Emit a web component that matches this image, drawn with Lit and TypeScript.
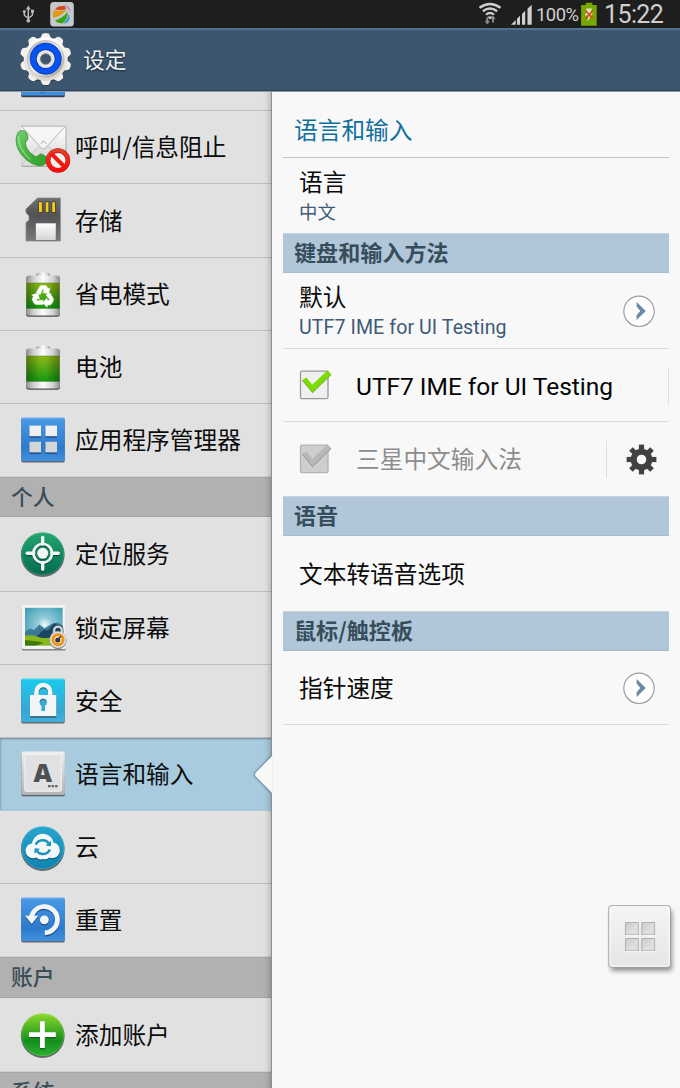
import { LitElement, html, svg, css, nothing } from "lit";
import { customElement, property } from "lit/decorators.js";
import { classMap } from "lit/directives/class-map.js";

const GEAR_ANGLES = [0, 36, 72, 108, 144, 180, 216, 252, 288, 324];
const COG_ANGLES = [0, 45, 90, 135, 180, 225, 270, 315];

const defs = svg`
  <defs>
    <linearGradient id="blue" x1="0" y1="0" x2="0" y2="1">
      <stop offset="0" stop-color="#4b9be9"/><stop offset=".7" stop-color="#2c7bcb"/><stop offset="1" stop-color="#4290e0"/>
    </linearGradient>
    <linearGradient id="cyan" x1="0" y1="0" x2="0" y2="1">
      <stop offset="0" stop-color="#1ccbee"/><stop offset=".75" stop-color="#37a6d2"/><stop offset="1" stop-color="#41b0dc"/>
    </linearGradient>
    <linearGradient id="teal" x1="0" y1="0" x2="0" y2="1">
      <stop offset="0" stop-color="#24a670"/><stop offset="1" stop-color="#026a50"/>
    </linearGradient>
    <linearGradient id="sea" x1="0" y1="0" x2="0" y2="1">
      <stop offset="0" stop-color="#27a5cd"/><stop offset="1" stop-color="#0f83b0"/>
    </linearGradient>
    <linearGradient id="lime" x1="0" y1="0" x2="0" y2="1">
      <stop offset="0" stop-color="#8fd92c"/><stop offset=".65" stop-color="#138f1d"/><stop offset="1" stop-color="#2fb02c"/>
    </linearGradient>
    <linearGradient id="cell" x1="0" y1="0" x2="0" y2="1">
      <stop offset="0" stop-color="#8fb814"/><stop offset="1" stop-color="#139a14"/>
    </linearGradient>
    <linearGradient id="side" x1="0" y1="0" x2="1" y2="0">
      <stop offset="0" stop-color="#000" stop-opacity=".33"/><stop offset=".4" stop-color="#000" stop-opacity="0"/>
      <stop offset=".6" stop-color="#000" stop-opacity="0"/><stop offset="1" stop-color="#000" stop-opacity=".33"/>
    </linearGradient>
    <linearGradient id="metal" x1="0" y1="0" x2="1" y2="0">
      <stop offset="0" stop-color="#8b8b8b"/><stop offset=".22" stop-color="#d0d0d0"/><stop offset=".5" stop-color="#fdfdfd"/>
      <stop offset=".8" stop-color="#d0d0d0"/><stop offset="1" stop-color="#8b8b8b"/>
    </linearGradient>
    <linearGradient id="paper" x1="0" y1="0" x2="0" y2="1">
      <stop offset="0" stop-color="#ffffff"/><stop offset="1" stop-color="#d4d4d4"/>
    </linearGradient>
    <linearGradient id="phone" x1="0" y1="0" x2="1" y2="1">
      <stop offset="0" stop-color="#78cf75"/><stop offset=".45" stop-color="#48b445"/><stop offset="1" stop-color="#2f9e2b"/>
    </linearGradient>
    <linearGradient id="red" x1="0" y1="0" x2="0" y2="1">
      <stop offset="0" stop-color="#e53c28"/><stop offset="1" stop-color="#ff0a08"/>
    </linearGradient>
    <linearGradient id="card" x1="0" y1="0" x2="0" y2="1">
      <stop offset="0" stop-color="#6b6e70"/><stop offset=".4" stop-color="#515355"/><stop offset="1" stop-color="#77797b"/>
    </linearGradient>
    <radialGradient id="sky" cx=".52" cy=".45" r=".65">
      <stop offset="0" stop-color="#f0fbfb"/><stop offset=".3" stop-color="#8fcbd9"/><stop offset="1" stop-color="#3f9cb4"/>
    </radialGradient>
    <linearGradient id="keycap" x1="0" y1="0" x2="0" y2="1">
      <stop offset="0" stop-color="#efefef"/><stop offset="1" stop-color="#b3b3b5"/>
    </linearGradient>
  </defs>`;

const tile = (fill: string) => svg`
  <rect x="21.2" y="14.6" width="43.6" height="43.8" rx="1.6" fill="#39424c" opacity=".75"/>
  <rect x="21.2" y="13.4" width="43.6" height="43.6" rx="1.6" fill=${fill}/>
  <path d="M22.5 14h41" stroke="#fff" stroke-opacity=".35" stroke-width=".9"/>`;

const disc = (fill: string) => svg`
  <circle cx="42.7" cy="38" r="21.9" fill="#36423e" opacity=".75"/>
  <circle cx="42.7" cy="36.7" r="21.5" fill=${fill}/>
  <circle cx="42.7" cy="36.7" r="21" fill="none" stroke="#fff" stroke-opacity=".2" stroke-width=".8"/>`;

const batteryBody = svg`
  <ellipse cx="43.2" cy="16.8" rx="7" ry="2.6" fill="url(#metal)"/>
  <rect x="26.2" y="20" width="33.6" height="38.8" rx="2.5" fill="#4e4e4e"/>
  <rect x="26" y="17.5" width="34" height="40" rx="3" fill="url(#metal)"/>
  <rect x="26.4" y="25" width="33.2" height="25.4" fill="url(#cell)"/>
  <rect x="26.4" y="25" width="33.2" height="25.4" fill="url(#side)"/>
  <path d="M26.4 50.4h33.2M26.4 25h33.2" stroke="#3a6a18" stroke-width=".7" opacity=".6"/>`;

const icons: Record<string, unknown> = {
  block: svg`
    <rect x="21.5" y="16" width="45" height="40" rx="1" fill="#8a8a8a" opacity=".6"/>
    <rect x="21.3" y="15" width="44.2" height="39.8" rx="1" fill="url(#paper)"/>
    <path d="M21.5 54 41 32.5a3.5 3.5 0 0 1 5 0L65.500 54" fill="#dedede" stroke="#c5c5c5" stroke-width="1"/>
    <path d="M21.3 15.200h44.200L45.500 37a3 3 0 0 1-4.200 0z" fill="#f5f5f5" stroke="#adadad" stroke-width=".9"/>
    <path d="M41 32.500l2.500-2.600 3 2.800" fill="none" stroke="#c8c8c8" stroke-width="1.200"/>
    <path d="M17.600 23.200c1.500-2.600 5.600-3.500 8.100-1.500 1.700 1.500 2.900 6.600 1.700 8.600-1.100 1.200-2.300 1.500-1.900 3.800 1 5.300 4.400 9.300 9.500 12.200 2.500 1.200 3.100-1.600 5.500-2.300 2.200-.4 6.500 3 7.400 5.200.9 2.500-3.900 6.100-7.400 6.500C30.500 55.800 15 43 16.200 28.500z" transform="translate(0 -1)" fill="url(#phone)" stroke="#2e8f2d" stroke-width=".8"/>
    <path d="M18.500 25c-.5 8.500 4.300 17.500 12 23.500" fill="none" stroke="#b5eeb0" stroke-width="1.500" opacity=".5"/>
    <circle cx="58" cy="49.500" r="9.900" fill="#f1efed" stroke="#a01e16" stroke-width="4.600"/>
    <circle cx="58" cy="49.300" r="9.900" fill="none" stroke="url(#red)" stroke-width="3.900"/>
    <path d="M51.300 42.600l13.400 13.400" stroke="#f0180f" stroke-width="4"/>`,
  storage: svg`
    <path d="M37.500 14H60.400V57H26V38.600l3-2.400V32l-3-3.500V25z" fill="url(#card)" stroke="#8a8c8e" stroke-width=".8"/>
    <g fill="#f4cc1c" stroke="#3c3a30" stroke-width=".8">
      <rect x="38.600" y="17.800" width="3.700" height="10.800"/><rect x="45.200" y="17.800" width="3.700" height="10.800"/><rect x="51.800" y="17.800" width="3.700" height="10.800"/>
    </g>
    <rect x="35.500" y="39" width="20.600" height="17.500" fill="url(#paper)" stroke="#55585a" stroke-width=".6"/>`,
  saver: svg`${batteryBody}
    <g transform="translate(43 38.600) scale(1.080) translate(-43 -38.300)">
    ${[0, 120, 240].map(
      (a) => svg`<g transform="rotate(${a} 43 38.300)">
        <path d="M36.800 34.400l3-5.100q.7-1.200 2-1.200h3.100q1.200 0 1.900 1.200l1 1.700 1.700-1-1.200 5.900-5.900-1.600 1.700-1-1.500-2.600-2.200 5.900z" fill="#fff" stroke="#fff" stroke-width=".4"/>
      </g>`
    )}</g>`,
  battery: batteryBody,
  apps: svg`${tile("url(#blue)")}
    ${[[29.4, 21.6], [45.4, 21.6], [29.4, 37.800], [45.4, 37.800]].map(
      ([x, y]) => svg`<rect x=${x} y=${y + 1.300} width="11.600" height="10.700" fill="#1d4b80"/>
        <rect x=${x} y=${y} width="11.600" height="10.600" fill=${y < 30 ? "#f0f0f0" : "#d3d5d7"}/>`
    )}`,
  location: svg`${disc("url(#teal)")}
    ${[["#06513c", 1.2], ["#f3f6f4", 0]].map(
      ([c, dy]) => svg`<g transform="translate(0 ${dy})" stroke=${c} fill="none">
        <circle cx="42.700" cy="36.300" r="9.300" stroke-width="2.700"/>
        <path d="M42.700 20.500v6.500M42.700 45.800v6.500M27.200 36.300h6.500M51.800 36.300h6.500" stroke-width="3.400" stroke-linecap="round"/>
        <circle cx="42.700" cy="36.300" r="5.500" fill=${c} stroke="none"/>
      </g>`
    )}`,
  lockscreen: svg`
    <rect x="21.800" y="14.500" width="44" height="44" rx="1.500" fill="#6d6d6d" opacity=".8"/>
    <rect x="21.800" y="13" width="44" height="44" rx="1.500" fill="#f3f3f3"/>
    <rect x="25" y="15.800" width="37.600" height="37.600" fill="url(#sky)"/>
    <path d="M25 40l5-3.500 4 1.500 5.500-5.500 5 4 7-4.500 6-1.500 5 3V48H25z" fill="#3b7895"/>
    <path d="M36 45l8-7.500 4 1 6-7.500 3.500 2 5.100 1V53H50z" fill="#1b4663"/>
    <path d="M25 43.500q7-1 12 1t10 1.500l8-1 7.600 1v7.400H25z" fill="#87b91c"/>
    <path d="M25 48q11 1 19 3l-8 2.400H25z" fill="#3f7804"/>
    <path d="M54 42v-3.500a4 4 0 0 1 8 0V42" fill="none" stroke="#d9dcdd" stroke-width="2.500"/>
    <path d="M52.700 41.500v-3a5.300 5.300 0 0 1 10.600 0v3" fill="none" stroke="#39434a" stroke-width=".6"/>
    <circle cx="58" cy="48.300" r="8.600" fill="#6f6f6f"/>
    <circle cx="58" cy="47.700" r="8.400" fill="#dbdbdb"/>
    <circle cx="58" cy="47.700" r="5" fill="#fff" stroke="#f29213" stroke-width="3"/>
    <circle cx="57.800" cy="48" r="2.600" fill="#30383e"/><path d="M57.800 48l3-3.800" stroke="#30383e" stroke-width="1.400"/>`,
  security: svg`${tile("url(#cyan)")}
    <path d="M36.400 32v-5a6.900 6.900 0 0 1 13.800 0v5" fill="none" stroke="#24617a" stroke-width="4.500" transform="translate(0 1.200)"/>
    <rect x="30" y="31" width="26.300" height="21.600" fill="#1f5067"/>
    <path d="M36.400 32v-5a6.900 6.900 0 0 1 13.800 0v5" fill="none" stroke="#f3f5f6" stroke-width="4.500"/>
    <rect x="30" y="30" width="26.300" height="21.200" fill="#f3f5f6"/>
    <circle cx="43.200" cy="37.500" r="3.600" fill="#3aa9d3"/><path d="M41.400 38h3.600v8h-3.600z" fill="#3aa9d3"/>
    <path d="M39.800 36.500a3.600 3.600 0 0 1 6.800 0" fill="none" stroke="#22607a" stroke-width=".9"/>`,
  language: svg`
    <rect x="21.500" y="15" width="43.400" height="43.300" rx="1.500" fill="#3e4a52" opacity=".8"/>
    <rect x="21.500" y="13.600" width="43.400" height="43.400" rx="1.500" fill="url(#keycap)"/>
    <rect x="24.800" y="16.500" width="36.600" height="36.800" rx="1" fill="#e0e1e3" stroke="#f1f1f1" stroke-width="1"/>
    <text x="42.700" y="43.600" text-anchor="middle" font-family="Open Sans, sans-serif" font-weight="800" font-size="25.500" fill="#4f5051">A</text>
    <path d="M48 48.200h2.600M51.500 48.200h2.600M55 48.200h2.600" stroke="#666" stroke-width="2.200"/>`,
  cloud: svg`${disc("url(#sea)")}
    ${[["#0b5c7c", 1.200], ["#f3f7f8", 0]].map(
      ([c, dy]) => svg`<path transform="translate(0 ${dy})" fill=${c} d="M33 47.300a7.400 7.400 0 0 1-7.400-7.500c0-4.400 3-7 6.400-7.400 1.200-5.800 5.600-9.700 10.800-9.700 5.400 0 9.600 3.500 10.800 9 3.500.3 6.200 3.500 6.200 7.600 0 4.800-3.500 8-7.800 7.900-1 0-1.800-.3-2.600-.8-1.800 1.500-4.200 2.300-6.400 1.500-2.600 1.300-5.300.3-6.600-1.300-1 .5-2.200.7-3.400.7z"/>`
    )}
    <g fill="none" stroke="#1b92bb" stroke-width="2.500">
      <path d="M35.700 33.600a7.600 7.600 0 0 1 13.400-.6"/><path d="M49.900 38.500a7.600 7.600 0 0 1-13.400.900"/>
    </g>
    <path d="M45.600 34.600l5.300.700.300-5.600zM40 37.800l-5.400-.600-.2 5.600z" fill="#1b92bb"/>`,
  reset: svg`${tile("url(#blue)")}
    ${[["#1d5088", 1.300], ["#f2f4f6", 0]].map(
      ([c, dy]) => svg`<g transform="translate(0 ${dy})">
        <path d="M31.200 34a13.200 13.200 0 1 1 13.600 14.900" fill="none" stroke=${c} stroke-width="4.700"/>
        <path d="M25 31.800h13.200L31.800 40z" fill=${c}/>
        <circle cx="44.300" cy="35.800" r="4.400" fill=${c}/>
      </g>`
    )}`,
  add: svg`${disc("url(#lime)")}
    <path d="M42.400 24.500v27M29 38h26.800" stroke="#126b18" stroke-width="4.800"/>
    <path d="M42.400 23.300v26.800M29 36.700h26.800" stroke="#fff" stroke-width="4.800"/>`,
  partial: svg`
    <rect x="21.200" y="-30" width="43.600" height="36.300" rx="1.600" fill="#39424c"/>
    <rect x="21.200" y="-30" width="43.600" height="34.500" rx="1.600" fill="#3f8fe0"/>
    <path d="M40.500 1h4" stroke="#1d4b80"/>`,
};

@customElement("status-bar")
class StatusBar extends LitElement {
  static styles = css`
    :host { display: flex; height: 28px; background: #1e1e1e; color: #cfcfcf; font-family: Roboto, sans-serif; align-items: center; }
    .left { display: block; flex: none; }
    .right { display: block; flex: none; margin-left: auto; }
    .pct { font-size: 18.4px; width: 45px; letter-spacing: -0.5px; line-height: 28px; padding-top: 1px; box-sizing: border-box; height: 28px; white-space: nowrap; }
    .cell { display: block; flex: none; }
    .time { font-size: 25px; line-height: 28px; height: 28px; box-sizing: border-box; padding-top: 1px; margin-left: 4px; width: 76px; letter-spacing: -0.6px; white-space: nowrap; }
  `;
  render() {
    return html`
      <svg class="left" width="80" height="28" viewBox="0 0 80 28">
        <g fill="none" stroke="#b9b9b9" stroke-width="1.500">
          <path d="M28.300 8v12M24.300 11v3.500q0 1.500 4 3.500M32.500 10.500v4q0 1.500-4.200 3.500"/>
        </g>
        <g fill="#b9b9b9"><path d="M25.800 9.500l2.500-4 2.500 4z"/><circle cx="28.300" cy="20.700" r="1.900"/><circle cx="24.300" cy="11.500" r="1.500"/><path d="M31 9.700h3v3h-3z"/></g>
        <rect x="50.200" y="2" width="23.600" height="24.600" rx="3.500" fill="#c6c8cb"/>
        <path d="M55 9q3-3.700 9.500-3 1.500 1.500 1.500 3-6 2.500-11 0z" fill="#d94a1b"/>
        <path d="M53 18q-1-4.500 1-8 7 2 13-.5-5 6.500-14 8.500z" fill="#dd9b14"/>
        <path d="M55 20.500Q63 18 67.500 12q1 6-5 11.500-5 0-7.500-3z" fill="#38a614"/>
        <path d="M68.500 14q3 5-1.500 8.500-1.500 1-3.500 1 4.500-4 5-9.500z" fill="#25a0d5"/>
        <path d="M63 5q6 .5 8 6.500l-2.500-2.500q-2-3-5.500-4z" fill="#ca59c9"/>
      </svg>
      <svg class="right" width="64" height="28" viewBox="472 0 64 28">
        <g fill="none" stroke="#cdcdcd" stroke-width="2.400">
          <path d="M479.500 7.800q10.500-7.600 21 0"/><path d="M482.900 11.300q7.100-5.400 14.200 0"/><path d="M486 14.600q4-3 8 0"/>
        </g>
        <path d="M487.300 16.500h5.400l-2.700 3z" fill="#cdcdcd"/>
        <g stroke="#8e8e8e" stroke-width="1.900" fill="#8e8e8e"><path d="M487.300 17.500v5M493 18v4.500" /><path d="M485.300 21.300h4l-2 2.800zM491 18.700h4l-2-2.600z" stroke-width=".8"/></g>
        <path fill="#cfcfcf" d="M511 24.700l4.700-4.700v4.700zM517 18.800l3-3v8.900h-3zM522 14l3.200-3.200v13.900H522zM527.500 8.700l4.200-4v20h-4.200z"/>
      </svg>
      <div class="pct">100%</div>
      <svg class="cell" width="19" height="28" viewBox="581 0 19 28">
        <path d="M585.700 2.700h6.600v2.200h4.400v20.800h-15.600V4.900h4.600z" fill="#76a800"/>
        <path d="M586.500 8.500h5.500l-1.300 4h2.300l-5.500 9.300.7-6.300h-3z" fill="#d9e4c0"/>
        <path d="M585.500 10.500l7.500 8.500M593 10.500l-7.500 8.500" stroke="#e0481e" stroke-width="1.700"/>
      </svg>
      <div class="time">15:22</div>`;
  }
}

@customElement("title-bar")
class TitleBar extends LitElement {
  static styles = css`
    :host { display: flex; align-items: center; height: 63px; box-sizing: border-box; background: #3b566e; border-top: 2px solid #4e7190; border-bottom: 1px solid #2c4254; box-shadow: 0 1px 0 #8b9aa8; position: relative; z-index: 2; }
    .gear { display: block; flex: none; align-self: flex-start; margin-top: -1px; }
    .name { margin-left: 4px; color: #f2f4f6; font: 21.700px/30px "Noto Sans CJK SC", sans-serif; text-shadow: 0 1px 2px rgba(0, 0, 0, 0.6); padding-bottom: 3px; }
  `;
  render() {
    return html`
      <svg class="gear" width="79" height="60" viewBox="0 29 79 60">
        <defs>
          <linearGradient id="rim" x1="0" y1="0" x2="0" y2="1"><stop offset="0" stop-color="#fff"/><stop offset="1" stop-color="#ddd6cf"/></linearGradient>
          <linearGradient id="in" x1="0" y1="0" x2="1" y2="1"><stop offset="0" stop-color="#a7a7a7"/><stop offset=".5" stop-color="#f1f1f1"/><stop offset="1" stop-color="#8c8c8c"/></linearGradient>
        </defs>
        <g fill="#203444" opacity=".6" transform="translate(0 1)">
          ${GEAR_ANGLES.map((a) => svg`<path transform="rotate(${a} 45.700 59)" d="M40.500 40l1.800-5.500q.3-1.500 3.400-1.500t3.400 1.500l1.800 5.500z"/>`)}
          <circle cx="45.700" cy="59" r="22.500"/>
        </g>
        ${GEAR_ANGLES.map((a) => svg`<path transform="rotate(${a} 45.700 59)" d="M39.500 40l2.500-5.500q.3-1.500 3.700-1.500t3.700 1.500l2.500 5.500z" fill="#f3f1ee"/>`)}
        <circle cx="45.700" cy="59" r="22" fill="url(#rim)"/>
        <circle cx="45.700" cy="59" r="18.400" fill="url(#in)" stroke="#bdb9b5" stroke-width=".8"/>
        <circle cx="45.700" cy="58.700" r="15.600" fill="#0553f3" stroke="#0937a8" stroke-width=".8"/>
        <circle cx="45.700" cy="59" r="7.300" fill="#3b566e" stroke="#0a3496" stroke-width="5"/>
        <circle cx="45.700" cy="59" r="7.200" fill="#3b566e" stroke="#e6e6e6" stroke-width="3.800"/>
        <circle cx="45.700" cy="59" r="5.300" fill="none" stroke="#707a84" stroke-width=".8"/>
      </svg>
      <div class="name">设定</div>`;
  }
}

@customElement("nav-row")
class NavRow extends LitElement {
  @property() icon = "";
  @property() label = "";
  @property({ type: Boolean }) selected = false;
  @property({ type: Boolean }) last = false;
  static styles = css`
    :host { display: block; }
    .row { position: relative; display: flex; align-items: center; height: 100%; box-sizing: border-box; border-bottom: 1px solid #bebebe; }
    .row.last { border-bottom-color: #d0d0d0; }
    .row.selected { background: #a8cbde; border-bottom-color: #a8cbde; box-shadow: inset 0 2px 2px -1px #6d8797, inset 2px 0 2px -1px #85a4b6; }
    .icon { display: block; flex: none; align-self: flex-start; overflow: hidden; }
    .label { margin-left: 3px; padding-bottom: 2px; color: #0c0c0c; font: 23.700px/34px "Noto Sans CJK SC", sans-serif; white-space: nowrap; }
    .notch { position: absolute; right: -1px; top: 17px; z-index: 3; display: block; filter: drop-shadow(-1px 0 1px rgba(40, 60, 75, 0.6)); }
  `;
  render() {
    return html`<div class=${classMap({ row: true, selected: this.selected, last: this.last })}>
      <svg class="icon" width="72" height="72" viewBox="0 0 72 72">${defs}${icons[this.icon]}</svg>
      <div class="label">${this.label}</div>
      ${this.selected
        ? html`<svg class="notch" width="18" height="40" viewBox="0 0 18 40"><path d="M18 1L1.800 17.500q-1.600 2 0 4L18 38z" fill="#f8f8f8"/></svg>`
        : nothing}
    </div>`;
  }
}

interface NavEntry { kind: "row" | "head"; label: string; icon?: string; h: number; selected?: boolean; last?: boolean; }

const NAV: NavEntry[] = [
  { kind: "row", label: "", icon: "partial", h: 20 },
  { kind: "row", label: "呼叫/信息阻止", icon: "block", h: 73 },
  { kind: "row", label: "存储", icon: "storage", h: 74 },
  { kind: "row", label: "省电模式", icon: "saver", h: 73 },
  { kind: "row", label: "电池", icon: "battery", h: 73 },
  { kind: "row", label: "应用程序管理器", icon: "apps", h: 73, last: true },
  { kind: "head", label: "个人", h: 40 },
  { kind: "row", label: "定位服务", icon: "location", h: 75 },
  { kind: "row", label: "锁定屏幕", icon: "lockscreen", h: 73 },
  { kind: "row", label: "安全", icon: "security", h: 73 },
  { kind: "row", label: "语言和输入", icon: "language", h: 73, selected: true },
  { kind: "row", label: "云", icon: "cloud", h: 73 },
  { kind: "row", label: "重置", icon: "reset", h: 73, last: true },
  { kind: "head", label: "账户", h: 41 },
  { kind: "row", label: "添加账户", icon: "add", h: 74, last: true },
  { kind: "head", label: "系统", h: 40 },
];

@customElement("nav-list")
class NavList extends LitElement {
  static styles = css`
    :host { display: block; position: relative; background: #e1e1e1; border-right: 1px solid #8e8e8e; box-sizing: border-box; width: 272px; }
    .edge { position: absolute; top: 0; right: 0; bottom: 0; width: 8px; background: linear-gradient(to right, rgba(0, 0, 0, 0), rgba(0, 0, 0, 0.04) 50%, rgba(0, 0, 0, 0.16)); pointer-events: none; z-index: 1; }
    .head { box-sizing: border-box; background: #b1b1b1; border-top: 1px solid #a8a8a8; border-bottom: 1px solid #a3a3a3; color: #3a4d57; padding-left: 11px; font: 500 21.800px/35px "Noto Sans CJK SC", sans-serif; overflow: hidden; }
  `;
  render() {
    return html`<div class="edge"></div>
      ${NAV.map((n) =>
        n.kind === "head"
          ? html`<div class="head" style="height:${n.h}px">${n.label}</div>`
          : html`<nav-row style="height:${n.h}px" .icon=${n.icon ?? ""} .label=${n.label} .selected=${!!n.selected} .last=${!!n.last}></nav-row>`
      )}`;
  }
}

@customElement("detail-pane")
class DetailPane extends LitElement {
  static styles = css`
    :host { display: flex; flex-direction: column; flex: 1; background: #f8f8f8; padding: 0 11px; font-family: Roboto, "Noto Sans CJK SC", sans-serif; }
    .title { box-sizing: border-box; height: 67px; padding: 21px 0 0 11px; border-bottom: 1px solid #b9c4ca; color: #10709c; font: 23.700px/34px "Noto Sans CJK SC", sans-serif; }
    .head { box-sizing: border-box; height: 40px; padding-left: 11px; background: #b2c6da; border-top: 1px solid #c6d4de; border-bottom: 1px solid #a9bccb; color: #364e5b; font: 700 22.100px/35px "Noto Sans CJK SC", sans-serif; }
    .row { box-sizing: border-box; display: flex; align-items: center; padding-left: 16px; }
    .line { border-bottom: 1px solid #dcdcdc; }
    .h75 { height: 75px; } .h76 { height: 76px; } .h73 { height: 73px; } .h74 { height: 74px; }
    .texts { flex: 1; display: flex; flex-direction: column; }
    .main { color: #0a0a0a; font: 23.700px/32px "Noto Sans CJK SC", sans-serif; padding-bottom: 2px; }
    .two { padding-bottom: 1px; margin-top: -3px; }
    .latin { color: #050505; font: 24.500px/32px Roboto, sans-serif; letter-spacing: -0.010px; margin-left: 24px; padding-top: 3px; flex: 1; white-space: nowrap; }
    .off { color: #8d8d8d; margin-left: 24px; flex: 1; }
    .sub { color: #405a77; font: 18.400px/26px "Noto Sans CJK SC", sans-serif; }
    .subl { color: #405a77; font: 19.600px/26px Roboto, sans-serif; letter-spacing: 0.080px; white-space: nowrap; padding-top: 2px; margin-bottom: -2px; }
    .go { display: block; margin-right: 13px; flex: none; }
    .check { display: block; flex: none; }
    .rule { width: 1px; height: 37px; background: #dedede; }
    .cog { display: block; margin: 0 12px 0 19px; flex: none; }
  `;
  private go() {
    return html`<svg class="go" width="34" height="34" viewBox="0 0 34 34">
      <circle cx="17" cy="17.300" r="15.200" fill="#fdfdfd" stroke="#9d9d9d" stroke-width="1.200"/>
      <path d="M14.600 7.900l9.200 9-9.200 9v-4.600l3.700-4.400-3.700-4.400z" fill="#6c89a6"/></svg>`;
  }
  private check(on: boolean) {
    return html`<svg class="check" width="33" height="34" viewBox="0 0 33 34">
      <rect x="1.500" y="3.200" width="27.500" height="27.500" rx="1.500" fill=${on ? "#efefef" : "#cecece"} stroke=${on ? "#989898" : "#b2b2b2"} stroke-width="1.300"/>
      <path d="M3.300 12.200l4-2.800 6 7.300L28.700 2.200l3.500 4.300L13.600 24.600z" fill=${on ? "#7cdb00" : "#b8b8b8"}/>
      <path d="M3.300 12.200l10.300 12.400L32.200 6.500" fill="none" stroke=${on ? "#67a321" : "#8c8c8c"} stroke-width=".9"/></svg>`;
  }
  render() {
    return html`
      <div class="title">语言和输入</div>
      <div class="row h75"><div class="texts"><div class="main two">语言</div><div class="sub">中文</div></div></div>
      <div class="head">键盘和输入方法</div>
      <div class="row line h76">
        <div class="texts"><div class="main two">默认</div><div class="subl">UTF7 IME for UI Testing</div></div>
        ${this.go()}
      </div>
      <div class="row line h73">${this.check(true)}<div class="latin">UTF7 IME for UI Testing</div><div class="rule"></div></div>
      <div class="row h74">${this.check(false)}<div class="main off">三星中文输入法</div><div class="rule"></div>
        <svg class="cog" width="31" height="31" viewBox="0 0 31 31">
          <g fill="#414141">${COG_ANGLES.map((a) => svg`<path transform="rotate(${a} 15.500 15.500)" d="M12.900 7V.6h5.200V7z"/>`)}</g>
          <circle cx="15.500" cy="15.500" r="7.800" fill="none" stroke="#414141" stroke-width="6"/>
        </svg>
      </div>
      <div class="head">语音</div>
      <div class="row h75"><div class="main">文本转语音选项</div></div>
      <div class="head">鼠标/触控板</div>
      <div class="row line h74"><div class="texts"><div class="main">指针速度</div></div>${this.go()}</div>`;
  }
}

@customElement("app-root")
class AppRoot extends LitElement {
  static styles = css`
    :host { display: flex; flex-direction: column; position: relative; width: 680px; height: 1088px; overflow: hidden; background: #f8f8f8; }
    .body { display: flex; flex: 1; min-height: 0; overflow: hidden; }
    .side { flex: none; }
    .float { position: absolute; left: 600px; top: 898px; display: block; }
  `;
  render() {
    return html`
      <status-bar></status-bar>
      <title-bar></title-bar>
      <div class="body"><nav-list class="side"></nav-list><detail-pane></detail-pane></div>
      <svg class="float" width="80" height="80" viewBox="0 0 80 80">
        <defs>
          <linearGradient id="pad" x1="0" y1="0" x2="0" y2="1"><stop offset="0" stop-color="#f5f5f5"/><stop offset="1" stop-color="#e5e5e5"/></linearGradient>
          <linearGradient id="hole" x1="0" y1="0" x2="1" y2="1"><stop offset="0" stop-color="#cbcbcb"/><stop offset=".6" stop-color="#dedede"/></linearGradient>
          <filter id="blur" x="-20%" y="-20%" width="140%" height="140%"><feGaussianBlur stdDeviation="2.800"/></filter>
        </defs>
        <rect x="11" y="12" width="61" height="61" rx="2" fill="#000" opacity=".42" filter="url(#blur)"/>
        <rect x="8.900" y="7.800" width="61.400" height="61.400" rx="2" fill="url(#pad)" stroke="#9a9a9a"/>
        <rect x="10" y="8.900" width="59.200" height="59.200" rx="1.500" fill="none" stroke="#fff"/>
        ${[[25.500, 24.500], [41.800, 24.500], [25.500, 40.500], [41.800, 40.500]].map(
          ([x, y]) => svg`<rect x=${x} y=${y} width="12.800" height="12.300" fill="url(#hole)" stroke="#adadad" stroke-width=".9"/>
          <path d="M${x} ${y + 13.200}h13.400" stroke="#fff" stroke-width=".9"/>`
        )}
      </svg>`;
  }
}
